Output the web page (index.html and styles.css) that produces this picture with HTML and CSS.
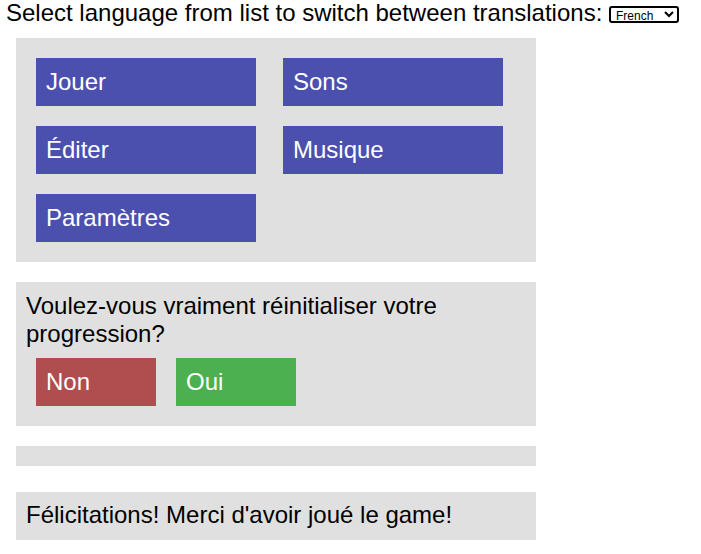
FILE: index.html
```html
<!DOCTYPE html>
<html lang="fr">
<head>
<meta charset="utf-8">
<title>Translations</title>
<link rel="stylesheet" href="styles.css">
</head>
<body>
<div class="header">Select language from list to switch between translations: <select class="lang"><option>French</option><option>English</option></select></div>
<div class="panel menu">
  <div class="btn blue">Jouer</div>
  <div class="btn blue">Sons</div>
  <div class="btn blue">Éditer</div>
  <div class="btn blue">Musique</div>
  <div class="btn blue">Paramètres</div>
</div>
<div class="panel confirm">
  <div class="question">Voulez-vous vraiment réinitialiser votre progression?</div>
  <div class="row">
    <div class="btn small red">Non</div>
    <div class="btn small green">Oui</div>
  </div>
</div>
<div class="panel empty"></div>
<div class="panel final">Félicitations! Merci d'avoir joué le game!</div>
</body>
</html>
```
FILE: styles.css
```css
html, body {
  margin: 0;
  padding: 0;
  background: #ffffff;
}
body {
  font-family: "Liberation Sans", Arial, sans-serif;
  color: #000000;
}
.header {
  font-size: 24px;
  line-height: 24px;
  padding: 1px 6px 0;
  height: 38px;
  box-sizing: border-box;
  white-space: nowrap;
}
.lang {
  font-family: "Liberation Sans", Arial, sans-serif;
  font-size: 12px;
  line-height: normal;
  height: 17px;
  width: 70px;
  padding: 0 0 0 1px;
  border: 2px solid #000;
  border-radius: 3px;
  background: #fff;
  color: #000;
  vertical-align: 1px;
  margin-left: 0;
}
.panel {
  background: #e0e0e0;
  width: 520px;
  margin-left: 16px;
  box-sizing: border-box;
  font-size: 24px;
  line-height: normal;
}
.menu {
  padding: 20px;
  display: grid;
  grid-template-columns: 220px 220px;
  column-gap: 27px;
  row-gap: 20px;
}
.btn {
  height: 48px;
  box-sizing: border-box;
  padding: 10px 10px 0;
  color: #ffffff;
  font-size: 24px;
  line-height: normal;
  white-space: nowrap;
}
.blue { background: #4b50ae; }
.red { background: #af4d4f; }
.green { background: #4caf50; }
.small { width: 120px; }
.confirm {
  margin-top: 20px;
  padding: 10px 10px 20px;
}
.row {
  display: flex;
  gap: 20px;
  margin: 10px 10px 0;
}
.empty {
  margin-top: 20px;
  height: 20px;
}
.final {
  margin-top: 26px;
  height: 48px;
  padding: 9px 10px 0;
}
```
